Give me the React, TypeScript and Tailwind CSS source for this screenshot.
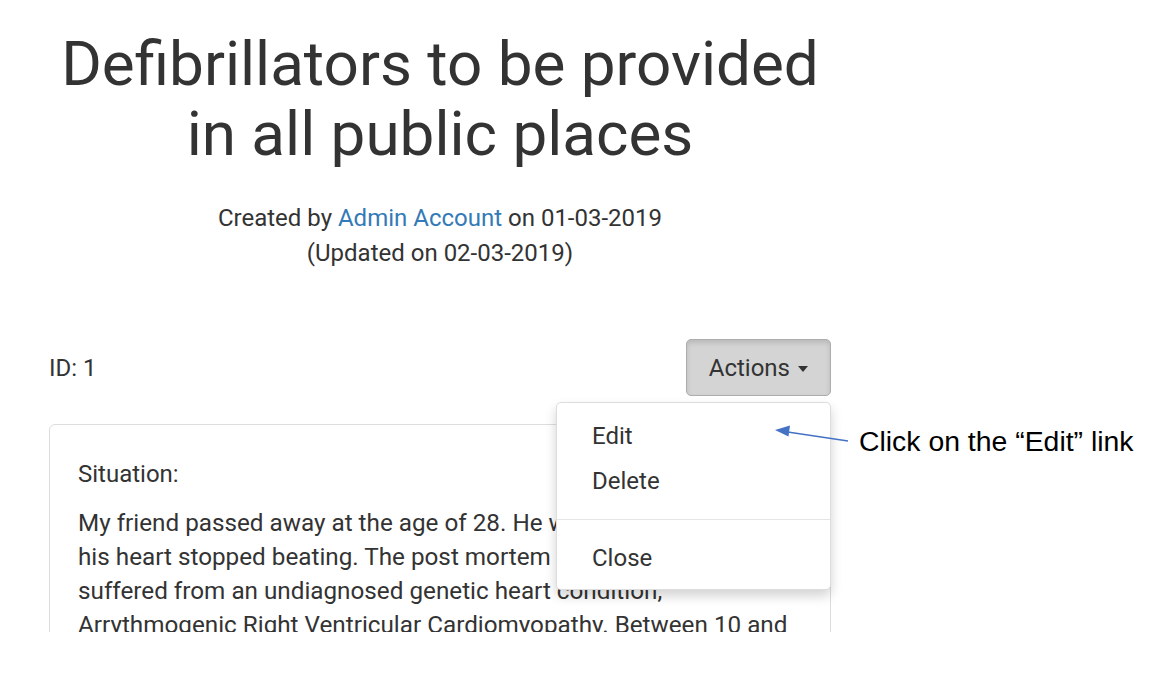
import React from 'react';

const ActionsMenu = () => {
  return (
    <div className="relative">
      <button className="flex h-[57px] items-center gap-[8px] rounded-[5px] border border-[#adadad] bg-[#d4d4d4] px-[22px] text-[24px] text-[#333] shadow-[inset_0_3px_5px_rgba(0,0,0,0.125)]">
        Actions
        <span className="mt-[2px] h-0 w-0 border-x-[5px] border-t-[6px] border-x-transparent border-t-[#333]" />
      </button>
      <div className="absolute right-0 top-[63px] z-10 w-[275px] rounded-[5px] border border-[#ddd] bg-white pt-[11px] pb-[8px] shadow-[0_6px_12px_rgba(0,0,0,0.175)]">
        <div className="h-[45px] px-[35px] text-[24px] leading-[45px]">Edit</div>
        <div className="h-[45px] px-[35px] text-[24px] leading-[45px]">Delete</div>
        <div className="mt-[15px] mb-[16px] h-px bg-[#e5e5e5]" />
        <div className="h-[45px] px-[35px] text-[24px] leading-[45px]">Close</div>
      </div>
    </div>
  );
};

const Annotation = () => {
  return (
    <div className="absolute left-[770px] top-[420px] z-20 flex items-start">
      <svg width="86" height="26" viewBox="0 0 86 26">
        <line x1="16" y1="11.8" x2="78" y2="21" stroke="#4472c4" strokeWidth="1.6" />
        <polygon points="5,10 20,5.5 18.5,16.5" fill="#4472c4" />
      </svg>
      <span className="mt-[5px] ml-[3px] font-['Liberation_Sans',sans-serif] text-[28.4px] leading-[32px] text-black">
        Click on the “Edit” link
      </span>
    </div>
  );
};

const App = () => {
  return (
    <div className="h-[676px] bg-white font-['Roboto',sans-serif] text-[#333]">
      <div className="relative h-[632px] overflow-hidden">
        <div className="ml-[49px] w-[782px]">
          <h1 className="pt-[29px] text-center text-[62px] leading-[70px]">
            Defibrillators to be provided
            <br />
            in all public places
          </h1>
          <div className="mt-[32px] text-center text-[24px] leading-[35px]">
            Created by <a className="text-[#337ab7]">Admin Account</a> on 01-03-2019
            <br />
            (Updated on 02-03-2019)
          </div>
          <div className="mt-[68px] flex items-center justify-between">
            <span className="text-[24px]">ID: 1</span>
            <ActionsMenu />
          </div>
          <div className="mt-[28px] rounded-[6px] border border-[#ddd] px-[28px] pt-[32px] pb-[20px]">
            <div className="text-[24px] leading-[34px]">Situation:</div>
            <p className="mt-[15px] text-[24.25px] leading-[34px]">
              My friend passed away at the age of 28. He was out running when his heart stopped
              beating. The post mortem revealed that he had suffered from an undiagnosed genetic
              heart condition, Arrythmogenic Right Ventricular Cardiomyopathy. Between 10 and 12
              young people die every week in the UK from undiagnosed heart conditions.
            </p>
          </div>
        </div>
        <Annotation />
      </div>
    </div>
  );
};

export default App;
